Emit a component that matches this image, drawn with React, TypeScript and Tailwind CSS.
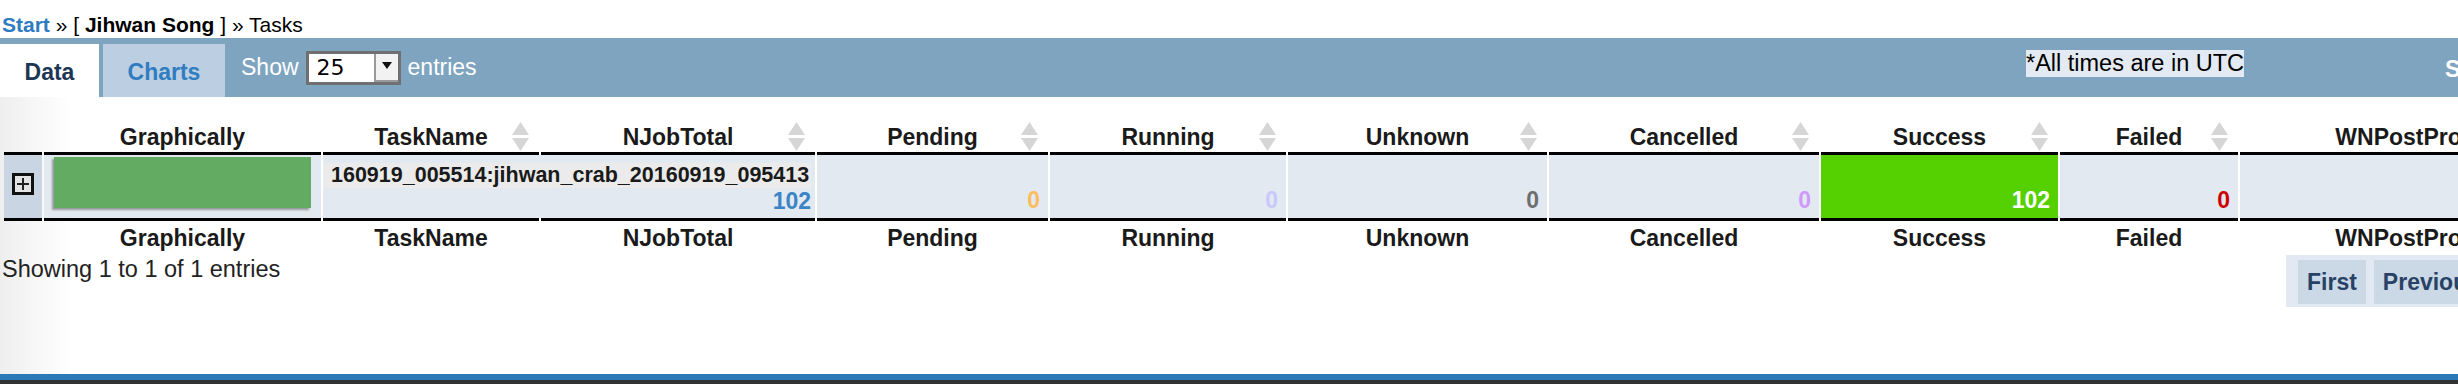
const F = "font-['Liberation_Sans',Arial,Helvetica,sans-serif]";

type Col = { label: string; w: string; sort: boolean };

const cols: Col[] = [
  { label: "", w: "w-[38px]", sort: false },
  { label: "Graphically", w: "w-[277px]", sort: false },
  { label: "TaskName", w: "w-[216px]", sort: true },
  { label: "NJobTotal", w: "w-[274px]", sort: true },
  { label: "Pending", w: "w-[231px]", sort: true },
  { label: "Running", w: "w-[236px]", sort: true },
  { label: "Unknown", w: "w-[259px]", sort: true },
  { label: "Cancelled", w: "w-[270px]", sort: true },
  { label: "Success", w: "w-[237px]", sort: true },
  { label: "Failed", w: "w-[178px]", sort: true },
  { label: "WNPostProc", w: "w-[330px]", sort: true },
];

// status counters, after TaskName/NJobTotal
const counts = [
  { v: "0", cls: "bg-[#e3e9f1] text-[#fbbd5e]" },
  { v: "0", cls: "bg-[#e3e9f1] text-[#c8c8fb]" },
  { v: "0", cls: "bg-[#e3e9f1] text-[#6e6e6e]" },
  { v: "0", cls: "bg-[#e3e9f1] text-[#cf99fb]" },
  { v: "102", cls: "bg-[#55d000] text-white" },
  { v: "0", cls: "bg-[#e3e9f1] text-[#cc0000]" },
  { v: "", cls: "bg-[#e3e9f1]" },
];

function SortArrows() {
  return (
    <svg width="17" height="29" viewBox="0 0 17 29" className="absolute right-[10px] top-[-1px]">
      <path d="M8.5 0 L17 13 L0 13 Z" fill="#d6d6d6" />
      <path d="M0 16 L17 16 L8.5 29 Z" fill="#d6d6d6" />
    </svg>
  );
}

function PlusIcon() {
  return (
    <svg width="22" height="22" viewBox="0 0 22 22" className="mx-auto block">
      <rect x="1.5" y="1.5" width="19" height="19" fill="#e4e4e4" stroke="#111" strokeWidth="3" />
      <path d="M11 5v12M5 11h12" stroke="#222" strokeWidth="2" />
    </svg>
  );
}

function EntriesSelect() {
  return (
    <div className="ml-[7px] flex h-[34px] w-[95px] border-[3px] border-[#707070] bg-white">
      <span className="flex-1 pl-[8px] font-['DejaVu_Sans',sans-serif] text-[22px] leading-[28px] text-black">
        25
      </span>
      <div className="flex w-[24px] justify-center border-b-[2px] border-l-[2px] border-[#9a9a9a] bg-[#f2f2f2] pt-[8px]">
        <svg width="10" height="7" viewBox="0 0 10 7">
          <path d="M0 0 L10 0 L5 7 Z" fill="#111" />
        </svg>
      </div>
    </div>
  );
}

export default function App() {
  return (
    <div className={`flex min-h-screen flex-col overflow-hidden bg-white text-[#1a1a1a] ${F}`}>
      {/* breadcrumb */}
      <div className="mb-[1px] pl-[2px] pt-[12px] text-[21px] leading-[25px] text-black">
        <a className="font-bold text-[#2e7bbf]">Start</a> » [ <b>Jihwan Song</b> ] » Tasks
      </div>

      {/* tabs + toolbar */}
      <div className="flex h-[59px] overflow-hidden bg-[#7fa4c0]">
        <div className="flex w-[2026px] shrink-0 items-center">
          <div className="flex h-[53px] w-[99px] items-center justify-center self-end bg-white pt-[4px] text-[23px] font-bold text-[#1e3655]">
            Data
          </div>
          <div className="ml-[4px] flex h-[53px] w-[122px] items-center justify-center self-end bg-[#bccfe2] pt-[4px] text-[23px] font-bold text-[#2f7dc0]">
            Charts
          </div>
          <span className="ml-[16px] text-[23px] text-white">Show</span>
          <EntriesSelect />
          <span className="ml-[7px] text-[23px] text-white">entries</span>
        </div>
        <div className="flex shrink-0 items-start">
          <span className="mt-[12px] bg-[#e3eaf3] text-[23.5px] leading-[27px] text-black">
            *All times are in UTC
          </span>
          <span className="ml-[201px] mt-[18px] text-[23px] font-bold leading-[26px] text-white">Search:</span>
        </div>
      </div>

      <div className="flex-1 overflow-hidden bg-[linear-gradient(to_right,#eeeeee,#ffffff_70px)]">
        <table className="ml-[2px] mt-[26px] w-[2570px] table-fixed border-separate border-spacing-x-[2px] border-spacing-y-0">
          <thead>
            <tr>
              {cols.map((c, i) => (
                <th
                  key={i}
                  className={`${c.w} relative border-b-[3px] border-black p-0 pb-[1px] text-center text-[23px] font-bold leading-[28px]`}
                >
                  {c.label}
                  {c.sort && <SortArrows />}
                </th>
              ))}
            </tr>
          </thead>
          <tbody>
            <tr className="h-[63px]">
              <td className="bg-[#c9d5e3] p-0 pt-[18px] align-top">
                <PlusIcon />
              </td>
              <td className="bg-[#e3e9f1] p-0 px-[10px] pt-[2px] align-top">
                <div className="h-[51px] bg-[#63ab63] shadow-[-2px_2px_2px_rgba(0,0,0,0.35)]" />
              </td>
              <td colSpan={2} className="bg-[#e3e9f1] p-0 pt-[8px] align-top">
                <span className="inline-block bg-[#ebebeb] pl-[8px] pr-[2px] text-[21.5px] font-bold leading-[25px] text-[#1a1a1a]">
                  160919_005514:jihwan_crab_20160919_095413
                </span>
                <div className="-mt-[1px] pr-[4px] text-right text-[23px] font-bold leading-[26px] text-[#3a84c6]">
                  102
                </div>
              </td>
              {counts.map((c, i) => (
                <td
                  key={i}
                  className={`${c.cls} p-0 pb-[5px] pr-[8px] text-right align-bottom text-[23px] font-bold leading-[26px]`}
                >
                  {c.v}
                </td>
              ))}
            </tr>
          </tbody>
          <tfoot>
            <tr>
              {cols.map((c, i) => (
                <th key={i} className="border-t-[3px] border-black p-0 pt-[4px] text-center text-[23px] font-bold leading-[26px]">
                  {c.label}
                </th>
              ))}
            </tr>
          </tfoot>
        </table>

        {/* info + paging */}
        <div className="mt-[5px] flex">
          <div className="w-[2286px] shrink-0 pl-[2px] text-[23.5px] leading-[27px] text-[#222]">
            Showing 1 to 1 of 1 entries
          </div>
          <div className="-mt-[1px] flex shrink-0 gap-[8px] bg-[#e3e9f2] px-[12px] pb-[3px] pt-[5px]">
            {["First", "Previous", "1", "Next", "Last"].map((p) => (
              <span
                key={p}
                className="flex h-[44px] items-center bg-[#cbd8e6] px-[9px] text-[23px] font-bold text-[#284266]"
              >
                {p}
              </span>
            ))}
          </div>
        </div>
      </div>

      <div className="h-[10px] shrink-0 border-t-[6px] border-[#2a7ab9] bg-[#323232]" />
    </div>
  );
}
